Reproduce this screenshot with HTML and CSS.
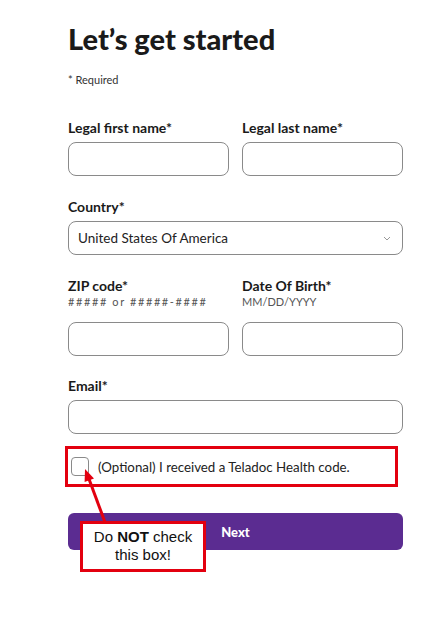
FILE: index.html
```html
<!DOCTYPE html>
<html>
<head>
    <title>Let's get started</title>
    <meta name="viewport" content="width=device-width, initial-scale=1.0">
    <link rel="stylesheet" href="styles.css">
</head>
<body>
    <main class="signup">
        <h1 class="title">Let’s get started</h1>
        <p class="required-note">* Required</p>

        <div class="row first-row">
            <div class="field">
                <label class="label">Legal first name*</label>
                <input class="input" type="text">
            </div>
            <div class="field">
                <label class="label">Legal last name*</label>
                <input class="input" type="text">
            </div>
        </div>

        <div class="field">
            <label class="label">Country*</label>
            <div class="select">
                <span>United States Of America</span>
                <svg class="chevron" width="8" height="5" viewBox="0 0 8 5"><path d="M1 1l3 3 3-3" fill="none" stroke="#999" stroke-width="1"/></svg>
            </div>
        </div>

        <div class="row">
            <div class="field">
                <label class="label">ZIP code*</label>
                <span class="hint hint-zip">##### or #####-####</span>
                <input class="input" type="text">
            </div>
            <div class="field">
                <label class="label">Date Of Birth*</label>
                <span class="hint">MM/DD/YYYY</span>
                <input class="input" type="text">
            </div>
        </div>

        <div class="field email-field">
            <label class="label">Email*</label>
            <input class="input" type="email">
        </div>

        <div class="code-row">
            <span class="checkbox"></span>
            <span class="code-text">(Optional) I received a Teladoc Health code.</span>
        </div>

        <div class="actions">
            <button class="next-btn">Next</button>
            <svg class="arrow" width="50" height="70" viewBox="0 0 50 70">
                <line x1="38" y1="62" x2="21" y2="16" stroke="#e3000f" stroke-width="3"/>
                <polygon points="17,6 16.6,19 26,15.4" fill="#e3000f"/>
            </svg>
            <div class="callout">Do <b>NOT</b> check this box!</div>
        </div>
    </main>
</body>
</html>
```

FILE: styles.css
```css
body {
    margin: 0;
    background: #fff;
    font-family: Lato, 'Noto Sans', sans-serif;
    color: #1a1a1a;
}

.signup {
    width: 335px;
    padding: 22px 0 40px 68px;
}

.title {
    margin: 0;
    font-size: 29px;
    font-weight: 900;
    line-height: 34px;
}

.required-note {
    margin: 17px 0 0;
    font-size: 11px;
    line-height: 14px;
    color: #333;
}

.row {
    display: grid;
    grid-template-columns: minmax(0, 1fr) minmax(0, 1fr);
    gap: 13px;
}

.field {
    display: flex;
    flex-direction: column;
    margin-top: 23px;
}

.email-field {
    margin-top: 22px;
}

.first-row .field {
    margin-top: 33px;
}

.label {
    font-size: 14px;
    font-weight: 700;
    line-height: 16px;
    margin-bottom: 6px;
}

.hint {
    font-size: 11px;
    line-height: 13px;
    color: #555;
    margin-top: -5px;
    margin-bottom: 14px;
}

.hint-zip {
    letter-spacing: 1.6px;
}

.input,
.select {
    box-sizing: border-box;
    width: 100%;
    min-width: 0;
    height: 34px;
    border: 1px solid #8a8a8a;
    border-radius: 8px;
    background: #fff;
}

.select {
    display: flex;
    align-items: center;
    justify-content: space-between;
    padding: 0 11px 0 9px;
    font-size: 13.5px;
    color: #222;
}

.code-row {
    display: flex;
    align-items: center;
    gap: 9px;
    margin: 12px 5px 0 -3px;
    height: 35px;
    padding: 0 0 0 3px;
    border: 3px solid #e3000f;
}

.checkbox {
    width: 16px;
    height: 17px;
    border: 1px solid #8a8a8a;
    border-radius: 4px;
}

.code-text {
    font-size: 13.3px;
    color: #222;
}

.actions {
    position: relative;
    margin-top: 26px;
}

.next-btn {
    display: block;
    width: 100%;
    height: 37px;
    border: 0;
    border-radius: 6px;
    background: #5b2c91;
    color: #fff;
    font-family: Lato, sans-serif;
    font-size: 13px;
    font-weight: 900;
}

.arrow {
    position: absolute;
    left: 0;
    top: -50px;
}

.callout {
    position: absolute;
    left: 12px;
    top: 8px;
    width: 126px;
    box-sizing: border-box;
    padding: 4px 6px 5px;
    border: 3px solid #e3000f;
    background: #fff;
    font-family: 'Liberation Sans', Arial, sans-serif;
    font-size: 15px;
    line-height: 18px;
    text-align: center;
    color: #111;
}
```
